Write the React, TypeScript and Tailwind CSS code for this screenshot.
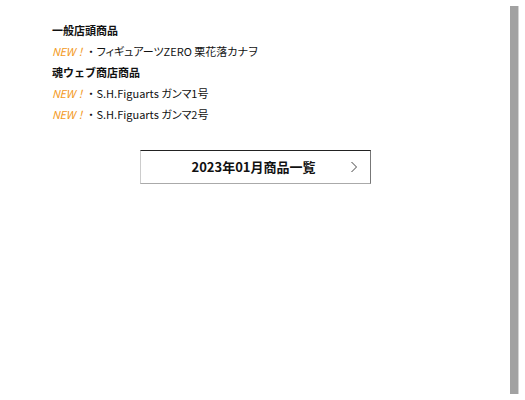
import React from "react";

const font = { fontFamily: '"Noto Sans CJK JP", "Noto Sans", sans-serif' };

function Item({ text }: { text: string }) {
  return (
    <div className="h-[21px] leading-[21px] text-[11px] text-[#111] whitespace-nowrap">
      <span className="italic tracking-[-0.4px] text-[#f39a1e]">NEW！</span>
      <span>・</span>
      <span className="[font-feature-settings:'palt']">{text}</span>
    </div>
  );
}

export default function App() {
  return (
    <div className="flex h-[400px] w-[525px] bg-white" style={font}>
      <div className="flex-1 pl-[52px] pt-[20px]">
        <div className="h-[21px] leading-[21px] text-[11px] font-bold text-[#111]">一般店頭商品</div>
        <Item text="フィギュアーツZERO 栗花落カナヲ" />
        <div className="h-[21px] leading-[21px] text-[11px] font-bold text-[#111]">魂ウェブ商店商品</div>
        <Item text="S.H.Figuarts ガンマ1号" />
        <Item text="S.H.Figuarts ガンマ2号" />
        <div className="relative mt-[25px] ml-[88px] flex h-[34px] w-[231px] items-center justify-center border-t border-r border-b border-l border-t-[#222] border-r-[#777] border-b-[#aaa] border-l-[#ccc]">
          <div className="pr-[4px] text-center text-[13px] font-bold text-[#111]">2023年01月商品一覧</div>
          <svg width="8" height="12" viewBox="0 0 8 12" className="absolute right-[12px] top-[10px]">
            <path d="M1.5 1 L6.5 6 L1.5 11" fill="none" stroke="#444" strokeWidth="1" />
          </svg>
        </div>
      </div>
      <div className="flex h-full">
        <div className="my-[6px] flex">
          <div className="w-[8px] bg-[#a2a2a2]" />
          <div className="w-[1px] bg-[#d4d4d4]" />
        </div>
        <div className="w-[6px]" />
      </div>
    </div>
  );
}
